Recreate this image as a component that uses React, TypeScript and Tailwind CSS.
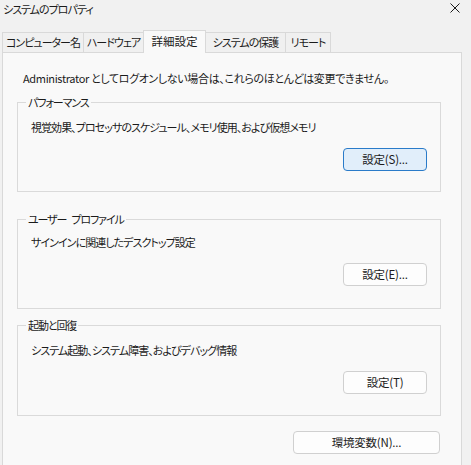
import React from "react";

const font = "font-['Noto_Sans_CJK_JP','Noto_Sans',sans-serif] [font-feature-settings:'palt']";

const tabs = [
  { label: "コンピューター名", w: "w-[82px]" },
  { label: "ハードウェア", w: "w-[61px]" },
  { label: "詳細設定", w: "w-[63px]", active: true },
  { label: "システムの保護", w: "w-[81px]" },
  { label: "リモート", w: "w-[46px]" },
];

const Button = ({ label, primary, className = "" }: { label: string; primary?: boolean; className?: string }) => (
  <button
    className={`h-[23px] rounded-[4px] border text-[11.5px] leading-none tracking-[-0.2px] text-[#1b1b1b] ${
      primary ? "border-[#2a7bc9] bg-[#e1eefa]" : "border-[#d0d0d0] bg-[#fdfdfd]"
    } ${className}`}
  >
    {label}
  </button>
);

const Group = ({
  title,
  desc,
  button,
  primary,
  h,
  descTop,
  btnTop,
}: {
  title: React.ReactNode;
  desc: string;
  button: string;
  primary?: boolean;
  h: string;
  descTop: string;
  btnTop: string;
}) => (
  <fieldset className={`ml-[14px] w-[424px] ${h} border border-[#dadada] px-[13px]`}>
    <legend className="ml-[-5px] px-[2px] text-[11px] leading-[14px] tracking-[-1.1px] text-[#1b1b1b]">{title}</legend>
    <div className={`${descTop} whitespace-nowrap text-[11px] leading-[16px] tracking-[-0.95px] text-[#1b1b1b]`}>{desc}</div>
    <div className={`flex justify-end ${btnTop}`}>
      <Button label={button} primary={primary} className="w-[84px]" />
    </div>
  </fieldset>
);

export default function App() {
  return (
    <div className={`w-[471px] h-[465px] overflow-hidden bg-[#f1f1f1] ${font} text-[#1b1b1b]`}>
      {/* title bar */}
      <div className="flex h-[30px] items-start justify-between">
        <span className="pl-[3px] pt-[1px] text-[11px] leading-[16px] tracking-[-1px]">システムのプロパティ</span>
        <svg width="10" height="10" viewBox="0 0 10 10" className="mr-[11px] mt-[3px]">
          <path d="M0.5 0.5 L9.5 9.5 M9.5 0.5 L0.5 9.5" stroke="#1b1b1b" strokeWidth="1" />
        </svg>
      </div>

      {/* tabs */}
      <div className="relative z-10 flex items-end pl-[2px] h-[22px]">
        {tabs.map((t) =>
          t.active ? (
            <div
              key={t.label}
              className={`${t.w} -ml-px h-[23px] -mb-px whitespace-nowrap border border-b-0 border-[#d9d9d9] bg-[#f9f9f9] text-center text-[11.5px] leading-[21px]`}
            >
              {t.label}
            </div>
          ) : (
            <div
              key={t.label}
              className={`${t.w} -ml-px first:ml-0 h-[20px] whitespace-nowrap border border-b-0 border-[#d9d9d9] bg-[#f0f0f0] text-center text-[11px] leading-[19px] tracking-[-1px]`}
            >
              {t.label}
            </div>
          )
        )}
      </div>

      {/* panel */}
      <div className="ml-[2px] w-[460px] h-[420px] border border-[#d9d9d9] bg-[#f9f9f9]">
        <p className="whitespace-nowrap pl-[20px] pt-[17px] text-[11px] leading-[16px] tracking-[-0.35px]">
          Administrator としてログオンしない場合は、これらのほとんどは変更できません。
        </p>
        <div className="mt-[9px]">
          <Group
            title="パフォーマンス"
            desc="視覚効果、プロセッサのスケジュール、メモリ使用、および仮想メモリ"
            button="設定(S)..."
            primary
            h="h-[97px]"
            descTop="mt-[10px]"
            btnTop="mt-[13px]"
          />
        </div>
        <div className="mt-[20px]">
          <Group
            title={
              <>
                ユーザー<span className="ml-[5px]">プロファイル</span>
              </>
            }
            desc="サインインに関連したデスクトップ設定"
            button="設定(E)..."
            h="h-[97px]"
            descTop="mt-[8px]"
            btnTop="mt-[13px]"
          />
        </div>
        <div className="mt-[9px]">
          <Group
            title="起動と回復"
            desc="システム起動、システム障害、およびデバッグ情報"
            button="設定(T)"
            h="h-[98px]"
            descTop="mt-[10px]"
            btnTop="mt-[13px]"
          />
        </div>
        <div className="mt-[15px] flex pl-[290px]">
          <Button label="環境変数(N)..." className="w-[147px]" />
        </div>
      </div>
    </div>
  );
}
